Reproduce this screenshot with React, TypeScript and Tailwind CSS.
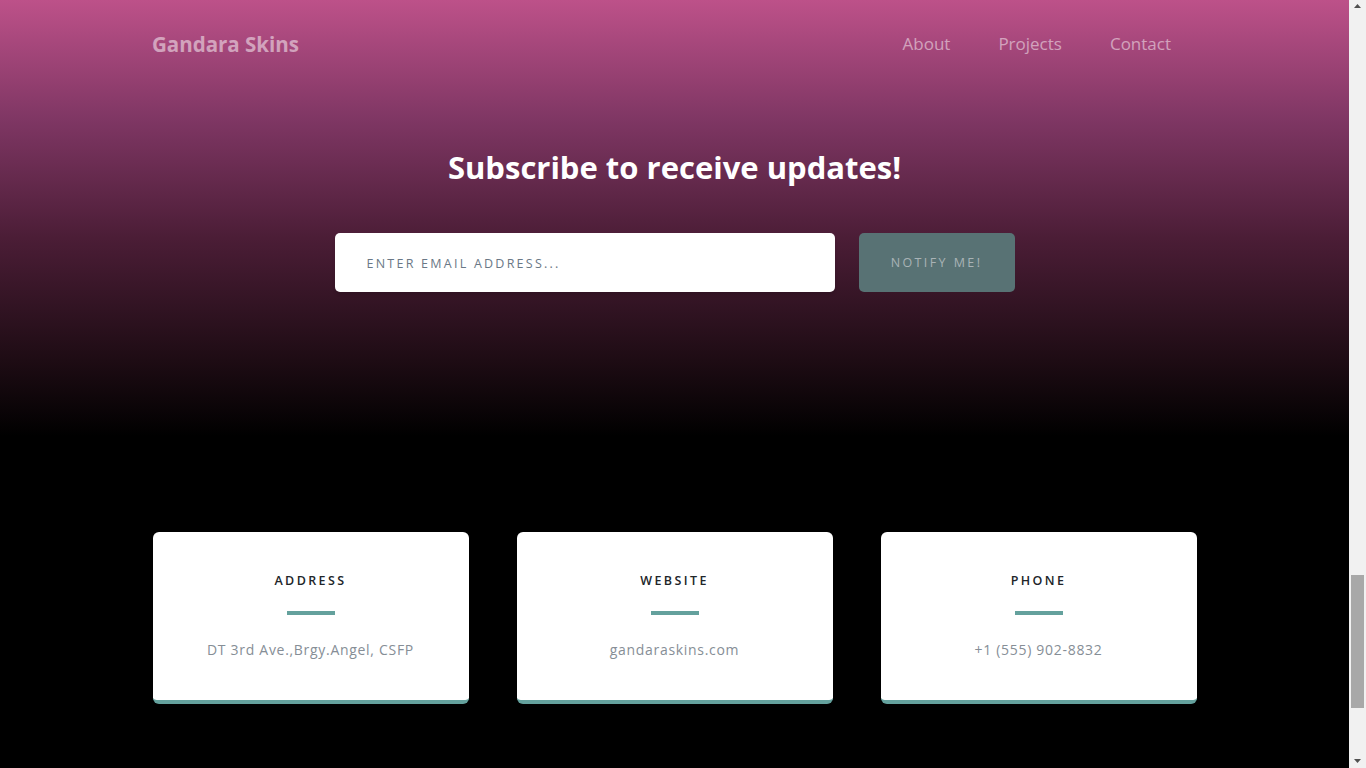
const cards = [
  { title: "Address", text: "DT 3rd Ave.,Brgy.Angel, CSFP" },
  { title: "Website", text: "gandaraskins.com" },
  { title: "Phone", text: "+1 (555) 902-8832" },
];

function Scrollbar() {
  return (
    <div className="flex w-[17px] shrink-0 flex-col bg-[#f1f1f1]">
      <div className="flex h-[17px] items-start justify-center pt-[4px]">
        <svg width="7" height="4" viewBox="0 0 7 4">
          <polygon points="3.5,0 7,4 0,4" fill="#505050" />
        </svg>
      </div>
      <div className="flex-1 px-[2px]">
        <div className="mt-[558px] h-[133px] bg-[#a8a8a8]" />
      </div>
      <div className="flex h-[17px] items-end justify-center pb-[5px]">
        <svg width="7" height="4" viewBox="0 0 7 4">
          <polygon points="0,0 7,0 3.5,4" fill="#505050" />
        </svg>
      </div>
    </div>
  );
}

export default function App() {
  return (
    <div className="flex h-screen overflow-hidden bg-black font-['Open_Sans',sans-serif]">
      <main className="min-w-0 flex-1">
        {/* signup */}
        <section className="h-[450px] bg-[linear-gradient(to_bottom,#bd5189_0%,#7e3663_27%,#4b1d36_53%,#1e0c14_80%,#000_97%)]">
          <nav className="mx-auto flex h-[88px] w-[1045px] items-center justify-between">
            <a className="text-[20.5px] font-bold text-white/50">Gandara Skins</a>
            <div className="mr-[2px] flex text-[17px] text-white/50">
              <a className="px-6">About</a>
              <a className="px-6">Projects</a>
              <a className="px-6">Contact</a>
            </div>
          </nav>

          <h2 className="mt-[59px] text-center text-[31px] leading-[40px] font-bold text-white">
            Subscribe to receive updates!
          </h2>

          <form className="mt-[46px] flex justify-center gap-6">
            <input
              type="email"
              placeholder="Enter email address..."
              className="h-[59px] w-[500px] rounded-[5px] bg-white px-8 pt-[2px] text-[12.5px] tracking-[0.14rem] uppercase shadow-[0_3px_3px_rgba(0,0,0,0.1)] outline-none placeholder:text-[#6a7886]"
            />
            <button
              type="button"
              disabled
              className="h-[59px] w-[156px] rounded-[5px] bg-[#587274] pt-[2px] text-[12.5px] tracking-[0.15rem] text-[#a9b3b6] uppercase"
            >
              Notify Me!
            </button>
          </form>
        </section>

        {/* contact */}
        <section className="pt-[82px]">
          <div className="mx-auto grid w-[1044px] grid-cols-3 gap-12">
            {cards.map((c) => (
              <div
                key={c.title}
                className="rounded-md border-b-4 border-[#64a19d] bg-white pt-[39px] pb-[40px] text-center"
              >
                <h4 className="text-[12.5px] leading-[20px] font-semibold tracking-[0.15rem] text-[#212529] uppercase">
                  {c.title}
                </h4>
                <div className="mx-auto mt-[20px] h-1 w-12 bg-[#64a19d]" />
                <div className="mt-[25px] text-[14px] leading-[20px] tracking-[0.05em] text-[#868e96]">
                  {c.text}
                </div>
              </div>
            ))}
          </div>
        </section>
      </main>
      <Scrollbar />
    </div>
  );
}
